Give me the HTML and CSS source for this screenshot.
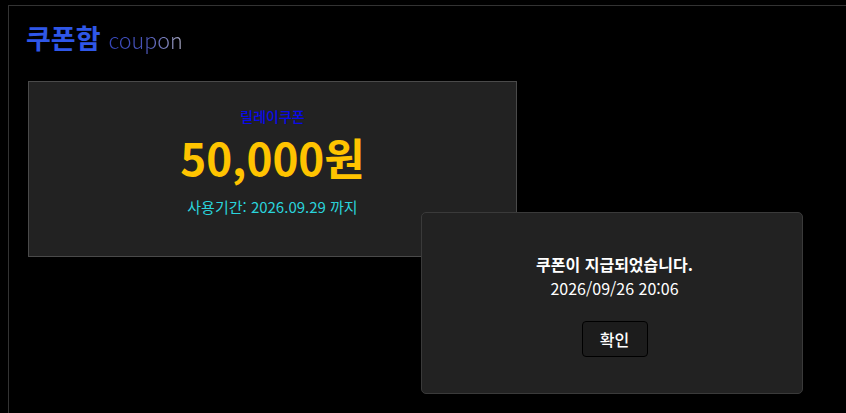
FILE: index.html
```html
<!DOCTYPE html>
<html lang="ko">
<head>
<meta charset="utf-8">
<link rel="stylesheet" href="styles.css">
</head>
<body>
<div class="frame">
  <h1 class="title"><span class="title-ko">쿠폰함</span><span class="title-en">coupon</span></h1>
  <div class="coupon">
    <div class="coupon-name">릴레이쿠폰</div>
    <div class="coupon-amount">50,000원</div>
    <div class="coupon-period">사용기간: 2026.09.29 까지</div>
  </div>
</div>
<div class="dialog">
  <div class="dialog-msg">쿠폰이 지급되었습니다.</div>
  <div class="dialog-date">2026/09/26 20:06</div>
  <button class="dialog-btn">확인</button>
</div>
</body>
</html>
```
FILE: styles.css
```css
html, body {
  margin: 0;
  padding: 0;
  background: #000;
  overflow: hidden;
  height: 100%;
}
body {
  padding: 5px 0 0 8px;
  box-sizing: border-box;
  font-family: "Noto Sans CJK KR", "Noto Sans", sans-serif;
  position: relative;
}
.frame {
  width: 850px;
  height: 420px;
  border: 1px solid #333;
  padding: 14px 0 0 19px;
  box-sizing: border-box;
}
.title {
  margin: 0 0 0 -2px;
  font-size: 27px;
  line-height: 36px;
  font-weight: 700;
  display: flex;
  align-items: baseline;
}
.title-ko {
  color: #2f57e8;
}
.title-en {
  margin-left: 8px;
  font-size: 21.5px;
  font-weight: 300;
  background: linear-gradient(90deg, #3445b8 0%, #4a55b8 50%, #a8a8c0 100%);
  -webkit-background-clip: text;
  background-clip: text;
  color: transparent;
}
.coupon {
  margin-top: 23px;
  width: 489px;
  height: 176px;
  box-sizing: border-box;
  background: #222;
  border: 1px solid #4a4a4a;
  display: flex;
  flex-direction: column;
  align-items: center;
  padding-top: 24px;
}
.coupon-name {
  color: #0a0ae8;
  font-size: 14px;
  line-height: 20px;
  font-weight: 500;
}
.coupon-amount {
  color: #ffc400;
  font-size: 44px;
  font-weight: 700;
  line-height: 46px;
  margin-top: 8px;
}
.coupon-period {
  color: #2ad4dc;
  font-size: 15px;
  line-height: 22px;
  margin-top: 16px;
}
.dialog {
  position: absolute;
  left: 421px;
  top: 212px;
  width: 382px;
  height: 182px;
  box-sizing: border-box;
  background: #222;
  border: 1px solid #3a3a3a;
  border-radius: 5px;
  display: flex;
  flex-direction: column;
  align-items: center;
  padding: 39px 0 0 5px;
  color: #fff;
}
.dialog-msg {
  font-size: 16px;
  font-weight: 700;
  line-height: 24px;
}
.dialog-date {
  font-size: 16px;
  line-height: 24px;
}
.dialog-btn {
  margin-top: 21px;
  width: 66px;
  height: 36px;
  background: #1c1c1c;
  border: 1px solid #000;
  border-radius: 4px;
  color: #fff;
  font-family: inherit;
  font-size: 16px;
  font-weight: 500;
  padding: 0;
}
```
